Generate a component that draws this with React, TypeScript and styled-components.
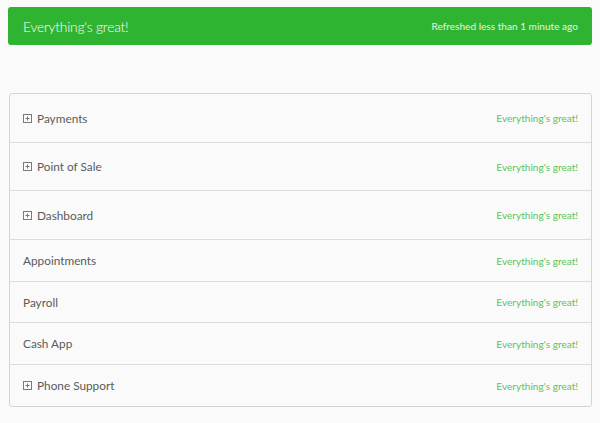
import React from 'react'
import styled, { createGlobalStyle } from 'styled-components'

const GlobalStyle = createGlobalStyle`
  body {
    margin: 0;
    background: #fafafa;
    font-family: Lato, "Open Sans", "Liberation Sans", sans-serif;
  }
`

type Service = { name: string; expandable?: boolean; height: number }

const services: Service[] = [
  { name: 'Payments', expandable: true, height: 48 },
  { name: 'Point of Sale', expandable: true, height: 47 },
  { name: 'Dashboard', expandable: true, height: 48 },
  { name: 'Appointments', height: 41 },
  { name: 'Payroll', height: 40 },
  { name: 'Cash App', height: 41 },
  { name: 'Phone Support', expandable: true, height: 41 },
]

const Page = styled.div`
  padding: 7px 8px 16px 8px;
`

const Banner = styled.div`
  display: flex;
  align-items: center;
  justify-content: space-between;
  height: 38px;
  padding: 0 14px 0 15px;
  background: #2fb432;
  border-radius: 3px;
  color: #fff;
`

const BannerTitle = styled.span`
  font-size: 13.8px;
  font-weight: 300;
  letter-spacing: -0.2px;
`

const BannerNote = styled.span`
  font-size: 10.1px;
  color: #e3f5e3;
`

const List = styled.div`
  margin: 48px 0 0 1px;
  border: 1px solid #d4d4d4;
  border-radius: 3px;
  background: #fafafa;
`

const Row = styled.div<{ $height: number }>`
  display: flex;
  align-items: center;
  justify-content: space-between;
  height: ${p => p.$height}px;
  padding: 0 13px;
  border-top: 1px solid #dcdcdc;
  &:first-child {
    border-top: none;
  }
`

const Name = styled.span`
  display: flex;
  align-items: center;
  gap: 5px;
  font-size: 11.8px;
  color: #5a5a5a;
`

const Status = styled.span`
  font-size: 10.1px;
  color: #5cc35c;
`

const PlusIcon = () => (
  <svg width="9" height="9" viewBox="0 0 9 9">
    <rect x="0.5" y="0.5" width="8" height="8" fill="none" stroke="#7a7a7a" strokeWidth="1" />
    <path d="M2.5 4.5h4M4.5 2.5v4" stroke="#7a7a7a" strokeWidth="1" />
  </svg>
)

const App: React.FC = () => (
  <>
    <GlobalStyle />
    <Page>
      <Banner>
        <BannerTitle>Everything's great!</BannerTitle>
        <BannerNote>Refreshed less than 1 minute ago</BannerNote>
      </Banner>
      <List>
        {services.map(s => (
          <Row key={s.name} $height={s.height}>
            <Name>
              {s.expandable && <PlusIcon />}
              {s.name}
            </Name>
            <Status>Everything's great!</Status>
          </Row>
        ))}
      </List>
    </Page>
  </>
)

export default App
